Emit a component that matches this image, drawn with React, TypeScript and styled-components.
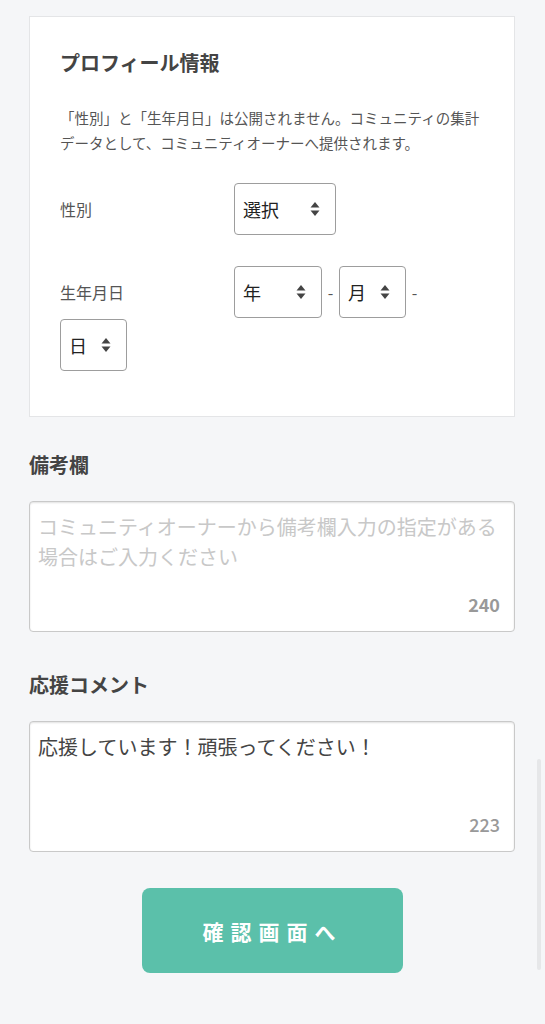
import { useState } from "react";
import styled, { createGlobalStyle } from "styled-components";

const GlobalStyle = createGlobalStyle`
  html, body {
    margin: 0;
    padding: 0;
    background: #f5f6f8;
  }
  body {
    font-family: "Noto Sans CJK JP", "Noto Sans", sans-serif;
    color: #444;
  }
`;

const MAX_LENGTH = 240;

const Arrows = () => (
  <svg width="10" height="16" viewBox="0 0 10 16">
    <path d="M0.5 6.5 L5 1 L9.5 6.5 Z" fill="#444" />
    <path d="M0.5 9.5 L9.5 9.5 L5 15 Z" fill="#444" />
  </svg>
);

type SelectProps = {
  width: number;
  placeholder: string;
};

const SelectBox = ({ width, placeholder }: SelectProps) => {
  return (
    <SelectWrap $width={width}>
      <NativeSelect defaultValue=''>
        <option value=''>{placeholder}</option>
      </NativeSelect>
      <ArrowSlot>
        <Arrows />
      </ArrowSlot>
    </SelectWrap>
  );
};

const App = () => {
  const [note, setNote] = useState("");
  const [comment, setComment] = useState("応援しています！頑張ってください！");

  return (
    <>
      <GlobalStyle />
      <Page>
        <Card>
          <CardTitle>プロフィール情報</CardTitle>
          <Notice>「性別」と「生年月日」は公開されません。コミュニティの集計データとして、コミュニティオーナーへ提供されます。</Notice>
          <FormRow $gap={28}>
            <Label>性別</Label>
            <SelectBox width={102} placeholder='選択' />
          </FormRow>
          <FormRow $gap={31}>
            <Label>生年月日</Label>
            <SelectBox width={88} placeholder='年' />
            <Sep>-</Sep>
            <SelectBox width={67} placeholder='月' />
            <Sep>-</Sep>
            <SelectBox width={67} placeholder='日' />
          </FormRow>
        </Card>

        <Heading $gap={33}>備考欄</Heading>
        <Field>
          <TextArea
            value={note}
            placeholder='コミュニティオーナーから備考欄入力の指定がある場合はご入力ください'
            onChange={(e) => setNote(e.target.value)}
          />
          <Counter $strong={note.length === 0}>{MAX_LENGTH - note.length}</Counter>
        </Field>

        <Heading $gap={38}>応援コメント</Heading>
        <Field>
          <TextArea value={comment} onChange={(e) => setComment(e.target.value)} />
          <Counter $strong={comment.length === 0}>{MAX_LENGTH - comment.length}</Counter>
        </Field>

        <Submit type='button'>確認画面へ</Submit>
      </Page>
      <ScrollThumb />
    </>
  );
};

export default App;

const Page = styled.main`
  display: flex;
  flex-direction: column;
  padding: 16px 30px 51px 29px;
`;

const Card = styled.section`
  background: #fff;
  border: 1px solid #e4e5e7;
  padding: 31px 30px 45px;
`;

const CardTitle = styled.h2`
  margin: 0;
  font-size: 20px;
  line-height: 30px;
  font-weight: 700;
  color: #444;
`;

const Notice = styled.p`
  margin: 27px 0 0;
  font-size: 14.5px;
  line-height: 25px;
  color: #555;
`;

const FormRow = styled.div<{ $gap: number }>`
  display: flex;
  flex-wrap: wrap;
  align-items: center;
  row-gap: 1px;
  margin-top: ${(p) => p.$gap}px;
`;

const Label = styled.span`
  width: 174px;
  font-size: 16px;
  color: #555;
`;

const Sep = styled.span`
  width: 17px;
  text-align: center;
  font-size: 16px;
  color: #555;
`;

const SelectWrap = styled.div<{ $width: number }>`
  position: relative;
  width: ${(p) => p.$width}px;
  height: 52px;
`;

const NativeSelect = styled.select`
  appearance: none;
  width: 100%;
  height: 100%;
  box-sizing: border-box;
  padding: 0 0 0 8px;
  border: 1px solid #9d9d9d;
  border-radius: 4px;
  background: #fff;
  font-family: inherit;
  font-size: 18px;
  color: #222;
  outline: none;
`;

const ArrowSlot = styled.span`
  position: absolute;
  right: 16px;
  top: 50%;
  transform: translateY(-50%);
  display: flex;
  pointer-events: none;
`;

const Heading = styled.h3<{ $gap: number }>`
  margin: ${(p) => p.$gap}px 0 21px;
  font-size: 20px;
  line-height: 30px;
  font-weight: 700;
  color: #444;
`;

const Field = styled.div`
  display: flex;
  flex-direction: column;
  height: 131px;
  box-sizing: border-box;
  padding: 10px 14px 15px 8px;
  background: #fff;
  border: 1px solid #c9c9c9;
  border-radius: 4px;
  box-shadow: inset 0 1px 2px rgba(0, 0, 0, 0.12);
`;

const TextArea = styled.textarea`
  flex: 1;
  resize: none;
  border: none;
  outline: none;
  padding: 0;
  background: transparent;
  font-family: inherit;
  font-size: 20px;
  line-height: 30px;
  color: #444;
  &::placeholder {
    color: #c8c8c8;
  }
`;

const Counter = styled.span<{ $strong: boolean }>`
  align-self: flex-end;
  font-size: 18px;
  line-height: 24px;
  font-weight: ${(p) => (p.$strong ? 700 : 500)};
  color: #999;
`;

const Submit = styled.button`
  align-self: center;
  margin-top: 36px;
  width: 261px;
  height: 85px;
  border: none;
  border-radius: 8px;
  background: #5bc0aa;
  color: #fff;
  font-family: inherit;
  font-size: 21px;
  font-weight: 700;
  letter-spacing: 7px;
  padding-left: 7px;
  cursor: pointer;
`;

const ScrollThumb = styled.div`
  position: fixed;
  right: 4px;
  top: 759px;
  width: 4px;
  height: 211px;
  border-radius: 2px;
  background: #e6e7e9;
`;
